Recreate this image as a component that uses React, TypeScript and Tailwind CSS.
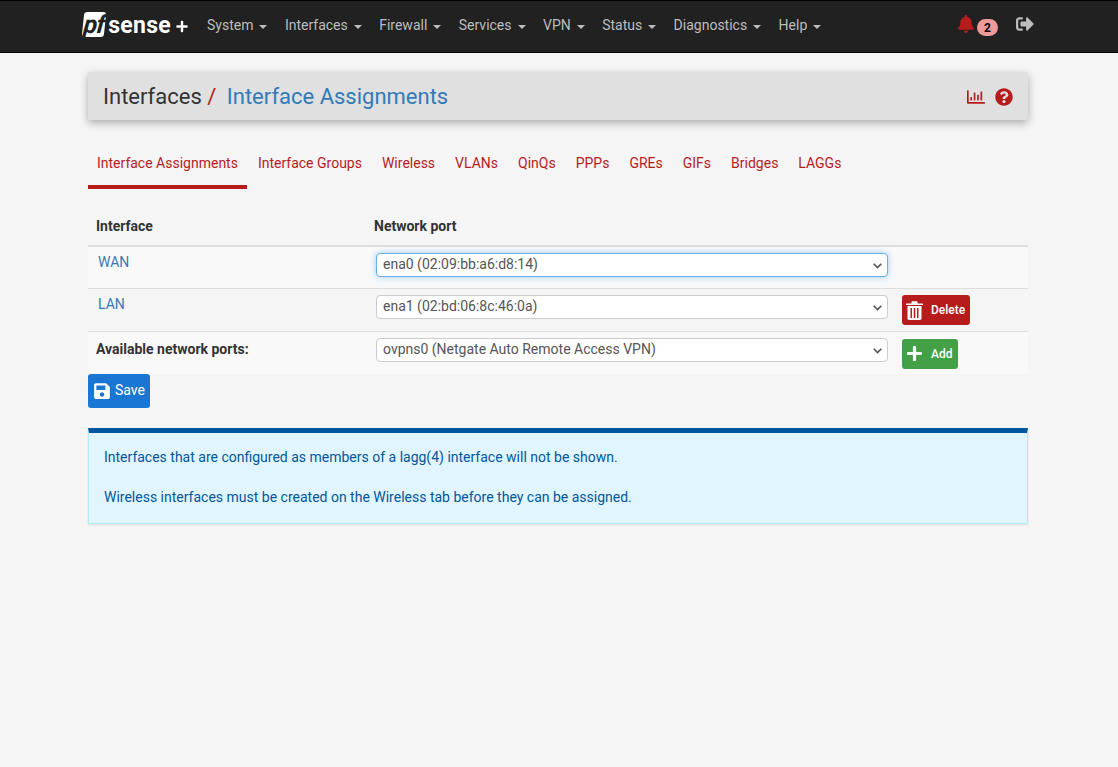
import React from 'react';
import { FaBell, FaSignOutAlt, FaRegChartBar, FaQuestionCircle, FaPlus, FaSave } from 'react-icons/fa';

const menus = ['System', 'Interfaces', 'Firewall', 'Services', 'VPN', 'Status', 'Diagnostics', 'Help'];
const tabs = ['Interface Assignments', 'Interface Groups', 'Wireless', 'VLANs', 'QinQs', 'PPPs', 'GREs', 'GIFs', 'Bridges', 'LAGGs'];

function Chevron() {
  return (
    <svg width="9" height="6" viewBox="0 0 9 6" className="absolute right-[5px] top-[9px]" fill="none" stroke="#555" strokeWidth="1.6">
      <path d="M.7.8l3.8 3.8L8.300.8" />
    </svg>
  );
}

function TrashIcon() {
  return (
    <svg width="17" height="19" viewBox="0 0 17 19" fill="#fff">
      <path d="M5.500 2.500V1.200C5.500.6 6 .2 6.500.2h4c.5 0 1 .4 1 1v1.300h4.800c.4 0 .7.300.7.700v.8H0v-.8c0-.4.300-.7.700-.7z" />
      <path fillRule="evenodd" d="M1.500 5h14v12.300c0 .9-.7 1.700-1.600 1.700H3.100c-.9 0-1.600-.8-1.600-1.700zM4.500 7v10h1.500V7zM7.800 7v10h1.500V7zM11 7v10h1.500V7z" />
    </svg>
  );
}

function FakeSelect({ value, focused }: { value: string; focused?: boolean }) {
  return (
    <div
      className={
        'relative h-[24px] w-[512px] rounded-[4px] border bg-white pl-[6px] text-[14px] leading-[21px] text-[#555] ' +
        (focused ? 'border-[#66afe9] shadow-[0_0_6px_rgba(102,175,233,0.6)]' : 'border-[#ccc]')
      }
    >
      {value}
      <Chevron />
    </div>
  );
}

export default function App() {
  return (
    <div className="min-h-[767px] bg-[#f5f5f5] font-['Roboto',sans-serif] text-[14px] text-[#333]">
      {/* Navbar */}
      <nav className="h-[53px] border-y border-black bg-[#212121]">
        <div className="ml-[83px] flex h-[51px] w-[951px] items-center text-[14px] text-[#bdbdbd]">
          <div className="mb-[4px] flex h-[25px] w-[105px] items-center">
            <div className="flex h-[25px] w-[24px] -skew-x-6 items-center justify-center rounded-[3px] bg-white">
              <span className="text-[25px] leading-none font-bold tracking-[-1px] text-[#212121] italic">pf</span>
            </div>
            <span className="mt-[1px] ml-[3px] text-[23px] leading-none font-bold tracking-[0.3px] text-white">sense</span>
            <FaPlus className="mt-[4px] ml-[5px] text-[13px] text-white" />
          </div>
          <div className="mb-[2px] ml-[19px] flex gap-[17.450px]">
            {menus.map((m) => (
              <span key={m} className="flex items-center gap-[6px]">
                {m}
                <span className="mt-[2px] h-0 w-0 border-x-[4px] border-t-[4px] border-x-transparent border-t-[#bdbdbd]" />
              </span>
            ))}
          </div>
          <div className="ml-auto flex items-center">
            <FaBell className="mb-[5px] text-[18px] text-[#b71c1c]" />
            <span className="mt-[2px] ml-[2px] flex h-[17px] w-[21px] items-center justify-center rounded-full bg-[#ef9a9a] text-[12px] font-bold text-black">2</span>
            <FaSignOutAlt className="mb-[5px] ml-[18px] text-[18px] text-[#bdbdbd]" />
          </div>
        </div>
      </nav>

      <div className="ml-[88px] w-[940px]">
        {/* Page header */}
        <div className="mt-[19px] flex h-[48px] items-center rounded-[2px] bg-[#e0e0e0] pt-[2px] pr-[15px] pl-[15px] shadow-[0_3px_8px_rgba(0,0,0,0.3)]">
          <h1 className="text-[22px] leading-none text-[#333]">
            Interfaces<span className="text-[#b71c1c]"> / </span>
            <span className="ml-[5px] text-[#337ab7]">Interface Assignments</span>
          </h1>
          <div className="ml-auto flex items-center gap-[10px] text-[#b71c1c]">
            <FaRegChartBar className="text-[18px]" />
            <FaQuestionCircle className="text-[18px]" />
          </div>
        </div>

        {/* Tabs */}
        <div className="mt-[19px] flex h-[50px] text-[#b71c1c]">
          {tabs.map((t, i) => (
            <div
              key={t}
              className={'h-[50px] pt-[16px] leading-[17px] ' + (i === 0 ? 'mr-[1px] border-b-[4px] border-[#b71c1c] pr-[9px] pl-[9px]' : 'px-[10px]')}
            >
              {t}
            </div>
          ))}
        </div>

        {/* Assignments table */}
        <div className="mt-[17px]">
          <div className="flex h-[41px] items-center border-b-2 border-[#ddd] font-bold">
            <div className="mt-[1px] w-[278px] pl-[8px]">Interface</div>
            <div className="mt-[1px] ml-[8px]">Network port</div>
          </div>
          <div className="flex h-[42px] border-b border-[#ddd] bg-[#f9f9f9]">
            <div className="w-[288px] pt-[5px] pl-[10px] text-[#337ab7]">WAN</div>
            <div className="pt-[6px]">
              <FakeSelect value="ena0 (02:09:bb:a6:d8:14)" focused />
            </div>
          </div>
          <div className="flex h-[43px] border-b border-[#ddd] bg-[#f5f5f5]">
            <div className="w-[288px] pt-[5px] pl-[10px] text-[#337ab7]">LAN</div>
            <div className="pt-[6px]">
              <FakeSelect value="ena1 (02:bd:06:8c:46:0a)" />
            </div>
            <div className="ml-[14px] pt-[6px]">
              <button className="flex h-[30px] w-[68px] items-center rounded-[3px] bg-[#b71c1c] pl-[4px] text-[12px] text-white">
                <TrashIcon />
                <span className="ml-[8px] font-medium">Delete</span>
              </button>
            </div>
          </div>
          <div className="flex h-[42px] bg-[#f9f9f9]">
            <div className="w-[288px] pt-[7px] pl-[8px] font-bold">Available network ports:</div>
            <div className="pt-[6px]">
              <FakeSelect value="ovpns0 (Netgate Auto Remote Access VPN)" />
            </div>
            <div className="ml-[14px] pt-[7px]">
              <button className="flex h-[30px] w-[56px] items-center rounded-[3px] bg-[#43a047] pb-[1px] pl-[4px] text-[12px] text-white">
                <FaPlus className="text-[17px]" />
                <span className="ml-[8px] font-medium">Add</span>
              </button>
            </div>
          </div>
        </div>

        <button className="flex h-[34px] w-[62px] items-center rounded-[3px] bg-[#1976d2] pb-[1px] pl-[5px] text-white">
          <FaSave className="text-[18px]" />
          <span className="ml-[4px] text-[14px]">Save</span>
        </button>

        {/* Info box */}
        <div className="mt-[20px] h-[96px] border border-t-[5px] border-[#b2ebf2] border-t-[#01579b] bg-[#e1f5fe] px-[15px] pt-[14px] leading-[20px] text-[#01579b] shadow-[0_1px_2px_rgba(0,0,0,0.1)]">
          <p>Interfaces that are configured as members of a lagg(4) interface will not be shown.</p>
          <p className="mt-[20px]">Wireless interfaces must be created on the Wireless tab before they can be assigned.</p>
        </div>
      </div>
    </div>
  );
}
